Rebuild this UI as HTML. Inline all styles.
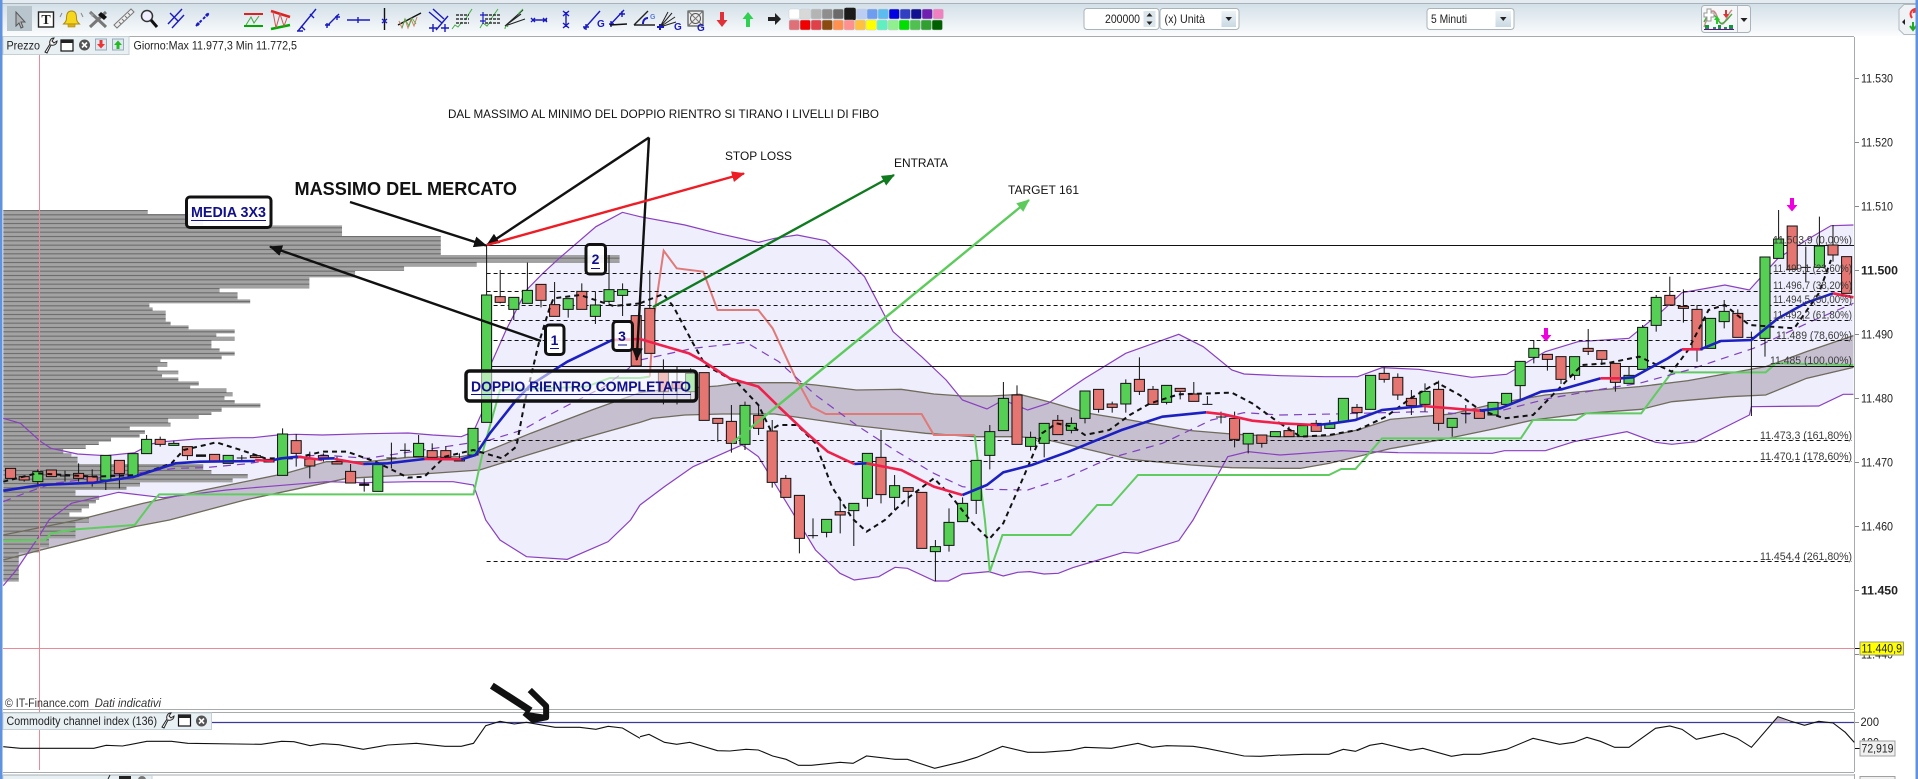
<!DOCTYPE html>
<html><head><meta charset="utf-8"><title>Grafico</title>
<style>
html,body{margin:0;padding:0;background:#fff;overflow:hidden;width:1918px;height:779px}
svg{display:block;font-family:"Liberation Sans",sans-serif}
.n *{vector-effect:non-scaling-stroke}
.ax{font-size:11.5px;fill:#222}
.fb{font-size:11px;fill:#3a3a3a}
.an{font-size:12px;fill:#111}
.tb{font-size:12px;fill:#222}
.g{fill:#55d055;stroke:#111;stroke-width:1}
.r{fill:#e57570;stroke:#111;stroke-width:1}
.w{fill:none;stroke:#111;stroke-width:1}
.bb{fill:none;stroke:#8a3fc0;stroke-width:1.2}
.bf{fill:#eeeefd;stroke:none}
.cl{fill:#c6bfd0;stroke:none}
.ce{fill:none;stroke:#6f6a5a;stroke-width:1.3}
.gl{fill:none;stroke:#60cc60;stroke-width:2}
.rl{fill:none;stroke:#e07a78;stroke-width:2}
.bl{fill:none;stroke:#1c20c0;stroke-width:2.6}
.rd{fill:none;stroke:#f0204a;stroke-width:2.6}
.kd{fill:none;stroke:#111;stroke-width:2;stroke-dasharray:5 4}
.pd{fill:none;stroke:#8040c0;stroke-width:1.2;stroke-dasharray:8 6}
.ck{fill:none;stroke:#111;stroke-width:1.1}
.bx{fill:none;stroke:#1a1ac0;stroke-width:1.4}
</style></head><body>
<svg width="1918" height="779" viewBox="0 0 1918 779" xmlns="http://www.w3.org/2000/svg">
<defs>
<linearGradient id="tbg" x1="0" y1="0" x2="0" y2="1"><stop offset="0" stop-color="#d3e0e8"/><stop offset="1" stop-color="#fbfcfd"/></linearGradient>
<linearGradient id="arb" x1="0" y1="0" x2="0" y2="1"><stop offset="0" stop-color="#eef3f6"/><stop offset="1" stop-color="#c9d9e3"/></linearGradient>
<pattern id="vp" patternUnits="userSpaceOnUse" width="100" height="13"><rect width="100" height="13" fill="#a3a3a3"/><rect y="6" width="100" height="3" fill="#666"/></pattern>
<marker id="mk" markerUnits="userSpaceOnUse" orient="auto" viewBox="0 0 13 11" refX="12" refY="5.5" markerWidth="13" markerHeight="11"><path d="M0 0L13 5.5L0 11Z" fill="#111"/></marker>
<marker id="mr" markerUnits="userSpaceOnUse" orient="auto" viewBox="0 0 13 11" refX="12" refY="5.5" markerWidth="13" markerHeight="11"><path d="M0 0L13 5.5L0 11Z" fill="#ee1c24"/></marker>
<marker id="mg" markerUnits="userSpaceOnUse" orient="auto" viewBox="0 0 13 11" refX="12" refY="5.5" markerWidth="13" markerHeight="11"><path d="M0 0L13 5.5L0 11Z" fill="#0f7a1e"/></marker>
<marker id="ml" markerUnits="userSpaceOnUse" orient="auto" viewBox="0 0 13 11" refX="12" refY="5.5" markerWidth="13" markerHeight="11"><path d="M0 0L13 5.5L0 11Z" fill="#5ccb5c"/></marker>
</defs>

<rect width="1918" height="779" fill="#fff"/>
<!-- top bar -->
<rect x="0" y="0" width="1918" height="3" fill="#e4ecf1"/>
<rect x="0" y="3" width="1918" height="1" fill="#a9b2b8"/>
<rect x="0" y="4" width="1918" height="32" fill="url(#tbg)"/>
<rect x="3" y="36" width="1851" height="1" fill="#a7abae"/>

<!-- chart content -->
<g class="n" transform="translate(0,260) scale(.40816,.33333)">
<!-- BB fill -->
<polygon class="bf" points="8,475 50,490 100,545 125,565 190,582 260,587 330,578 370,552 400,545 480,537 570,533 620,533 680,525 725,523 790,525 900,521 1000,519 1060,525 1130,530 1160,515 1180,460 1200,320 1240,210 1290,90 1330,40 1370,-5 1460,-100 1525,-143 1568,-130 1568,735 1545,780 1490,845 1390,898 1290,890 1225,840 1190,780 1160,675 1110,665 1010,665 890,668 800,665 650,680 555,690 400,713 290,697 175,730 120,780 95,830 40,930 8,977"/>
<g transform="translate(1568)"><polygon class="bf" points="0,-130 110,-105 190,-80 290,-53 330,-65 385,-75 455,-58 510,0 550,50 620,215 690,290 750,360 790,420 850,447 890,420 950,450 1000,430 1090,355 1190,280 1320,223 1380,260 1450,330 1480,342 1568,347 1568,585 1490,575 1440,590 1355,780 1320,842 1220,880 1185,877 1115,903 1060,923 1025,940 990,942 955,935 925,937 890,948 855,935 790,942 755,963 722,963 655,925 625,922 585,950 525,960 490,940 430,870 380,770 290,590 250,555 130,620 60,680 0,735"/></g>
<g transform="translate(3136)"><polygon class="bf" points="0,347 110,350 190,350 250,323 340,328 470,352 555,343 650,275 730,245 855,235 930,160 985,98 1090,75 1150,90 1220,-5 1290,-60 1350,-103 1405,-105 1405,403 1380,403 1320,438 1155,440 1150,465 1020,545 960,553 920,547 850,515 720,545 650,572 550,572 520,580 290,578 150,572 0,585"/></g>
<!-- cloud -->
<polygon class="cl" points="8,825 190,780 350,730 500,690 700,640 800,605 900,605 1000,592 1130,590 1190,575 1300,520 1450,450 1568,398 1568,487 1400,545 1280,590 1175,630 1000,645 850,655 600,720 415,780 330,800 100,870 8,900"/>
<!-- volume profile -->
<path fill="url(#vp)" d="M8,-150H362V-138H498V-104H838V-72H1080V-15H1518V8H1168V20H990V33H870V52H758V85H538V97H582V118H613V130H366V142H374V152H406V185H418V196H462V208H575V220H530V230H575V242H518V265H538V275H575V287H543V298H393V306H410V320H386V332H437V343H397V352H437V364H487V377H466V385H555V397H570V409H550V420H575V430H638V443H543V456H518V465H487V476H412V488H418V500H318V510H355V522H342V533H272V545H242V555H210V567H155V580H175V590H190V612H498V630H518V642H607V655H570V667H343V680H310V690H185V707H243V720H235V730H218V745H200V757H170V770H218V788H185V835H120V862H98V877H46V965H8Z"/>
<polyline class="ce" points="8,825 190,780 350,730 500,690 700,640 800,605 900,605 1000,592 1130,590 1190,575 1300,520 1450,450 1568,398"/>
<polyline class="ce" points="8,900 100,870 330,800 415,780 600,720 850,655 1000,645 1175,630 1280,590 1400,545 1568,487"/>
<g transform="translate(1568)">
<polygon class="cl" points="0,398 50,390 190,378 250,368 370,368 430,375 530,390 640,388 720,402 790,408 860,408 930,403 1000,425 1100,460 1200,480 1350,512 1450,522 1568,530 1568,625 1450,623 1350,615 1200,598 1110,572 1000,540 930,530 820,530 700,520 530,497 330,462 200,462 110,465 30,475 0,487"/>
<polyline class="ce" points="0,398 50,390 190,378 250,368 370,368 430,375 530,390 640,388 720,402 790,408 860,408 930,403 1000,425 1100,460 1200,480 1350,512 1450,522 1568,530"/>
<polyline class="ce" points="0,487 30,475 110,465 200,462 330,462 530,497 700,520 820,530 930,530 1000,540 1110,572 1200,598 1350,615 1450,623 1568,625"/>
</g>
<g transform="translate(3136)">
<polygon class="cl" points="0,530 120,528 190,510 270,478 420,462 530,430 650,405 780,390 880,380 1000,362 1190,320 1290,275 1405,227 1405,322 1290,355 1190,405 1100,410 960,425 885,448 750,460 620,480 530,505 400,538 270,566 190,590 120,610 50,625 0,625"/>
<polyline class="ce" points="0,530 120,528 190,510 270,478 420,462 530,430 650,405 780,390 880,380 1000,362 1190,320 1290,275 1405,227"/>
<polyline class="ce" points="0,625 50,625 120,610 190,590 270,566 400,538 530,505 620,480 750,460 885,448 960,425 1100,410 1190,405 1290,355 1405,322"/>
</g>
<!-- BB lines -->
<polyline class="bb" points="8,475 50,490 100,545 125,565 190,582 260,587 330,578 370,552 400,545 480,537 570,533 620,533 680,525 725,523 790,525 900,521 1000,519 1060,525 1130,530 1160,515 1180,460 1200,320 1240,210 1290,90 1330,40 1370,-5 1460,-100 1525,-143 1568,-130"/>
<polyline class="bb" points="8,977 40,930 95,830 120,780 175,730 290,697 400,713 555,690 650,680 800,665 890,668 1010,665 1110,665 1160,675 1190,780 1225,840 1290,890 1390,898 1490,845 1545,780 1568,735"/>
<g transform="translate(1568)">
<polyline class="bb" points="0,-130 110,-105 190,-80 290,-53 330,-65 385,-75 455,-58 510,0 550,50 620,215 690,290 750,360 790,420 850,447 890,420 950,450 1000,430 1090,355 1190,280 1320,223 1380,260 1450,330 1480,342 1568,347"/>
<polyline class="bb" points="0,735 60,680 130,620 250,555 290,590 380,770 430,870 490,940 525,960 585,950 625,922 655,925 722,963 755,963 790,942 855,935 890,948 925,937 955,935 990,942 1025,940 1060,923 1115,903 1185,877 1220,880 1320,842 1355,780 1440,590 1490,575 1568,585"/>
</g>
<g transform="translate(3136)">
<polyline class="bb" points="0,347 110,350 190,350 250,323 340,328 470,352 555,343 650,275 730,245 855,235 930,160 985,98 1090,75 1150,90 1220,-5 1290,-60 1350,-103 1405,-105"/>
<polyline class="bb" points="0,585 150,572 290,578 520,580 550,572 650,572 720,545 850,515 920,547 960,553 1020,545 1150,465 1155,440 1320,438 1380,403 1405,403"/>
</g>
<!-- stop line -->
<polyline class="gl" points="8,842 110,840 125,820 185,808 330,795 370,730 390,703 1160,703 1185,565 1225,390 1437,380 1494,354 1568,354"/>
<g transform="translate(1568)">
<polyline class="gl" points="0,354 24,350"/>
<polyline class="rl" points="24,350 33,180 58,-28 90,25 155,35 190,150 290,150 325,205 380,350 420,440 455,462 690,462 720,525 820,525"/>
<polyline class="gl" points="820,525 845,780 857,935 888,825 1055,825 1120,735 1155,735 1220,645 1568,645"/>
</g>
<g transform="translate(3136)"><polyline class="gl" points="0,645 120,645 150,627 185,627 250,535 590,535 620,480 725,480 750,460 885,460 960,337 1190,337 1215,310 1405,315"/></g>
<!-- purple dashed -->
<polyline class="pd" points="8,725 60,700 130,670 430,625 500,623 600,612 720,590 790,585 900,595 1200,540 1280,510 1330,475 1400,430 1480,380 1568,300"/>
<g transform="translate(1568)"><polyline class="pd" points="0,300 130,265 260,247 340,305 430,405 530,495 630,575 720,640 790,680 850,688 950,690 1050,650 1150,595 1280,550 1400,480 1480,458 1568,465"/></g>
<g transform="translate(3136)"><polyline class="pd" points="0,465 130,462 350,455 500,465 660,415 800,385 880,370 1000,330 1160,265 1300,185 1405,130"/></g>
</g>

<!-- red cursor lines -->
<path d="M39.5 54V770M3 648.5H1854" stroke="#e98a9a" stroke-width="1" fill="none"/>

<!-- fib lines -->
<path d="M486.6 245.5H1854M486.6 366.5H1854" stroke="#111" stroke-width="1" fill="none"/>
<path d="M486.6 273.5H1852M486.6 291.5H1852M486.6 305.5H1852M486.6 320.5H1852M486.6 340.5H1852M486.6 440.5H1852M486.6 461.5H1852M486.6 561.5H1852" stroke="#111" stroke-width="1" stroke-dasharray="4 3" fill="none"/>

<!-- candles: x=index, y=zoom units -->
<g class="n" transform="translate(486.6,260) scale(13.6,.33333)">
<path class="w" d="M-34 648V665M-33 628V680M-31 632V665M-30 610V665M-29 628V680M-28 586V690M-27 601V685M-26 581V655M-25 525V581M-24 530V560M-23 542V556M-22 560V600M-18 585V600M-15 505V646M-14 522V620M-13 575V655M-12 580V605M-11 590V612M-10 612V669M-9 655V695M-7 548V625M-6 550V592M-5 525V590M-4 550V592M-3 558V600M-2 580V603M0 -45V105M1 30V130M2 112V180M3 8V130M4 73V142M5 66V169M6 116V173M7 70V148M8 95V192M9 -15V130M10 70V168M12 32V280M13 298V433M14 320V433M15 325V418M17 490V545M18 435V578M19 425V570M20 435V525M21 480V683M22 645V712M23 835V880M24 775V835M25 778V832M26 712V820M27 730V858M28 580V740M29 510V730M30 645V750M31 683V740M33 840V964M34 745V875M35 712V785M36 601V762M37 495V628M38 366V512M39 376V553M40 515V572M41 490V592M42 465V524M43 472V520M44 393V490M45 388V458M46 425V458M47 358V458M48 292V405M49 378V433M50 376V433M51 385V418M52 366V424M53 408V433M54 455V490M55 455V562M56 520V580M57 525V563M59 500V530M61 480V514M62 480V505M64 432V478M66 322V368M67 340V420M68 390V465M69 370V455M70 362V512M71 475V530M72 435V490M76 304V420M77 240V310M78 283V332M79 290V372M80 290V360M81 207V285M82 272V315M83 310V395M84 320V370M85 195V328M86 105V215M87 50V135M88 88V188M89 135V305M91 120V205M92 148V232M93 215V468M94 235V290M95 -150V-5M97 -40V65M98 -130V22M99 -105V5"/>
<path class="w" d="M-31.37 648H-30.63M-18.37 594H-17.63M-7.37 594H-6.63M-6.37 571H-5.63M23.63 827H24.37M52.63 433H53.37M53.63 471H54.37M71.63 460H72.37M92.63 232H93.37M96.63 22H97.37"/>
<path d="M-21.37 587H-20.63M-9.37 674H-8.63" stroke="#111" stroke-width="2.5" fill="none"/>
<g class="r">
<rect x="-35.37" y="625" width=".74" height="30"/><rect x="-34.37" y="650" width=".74" height="10"/><rect x="-32.37" y="630" width=".74" height="20"/><rect x="-30.37" y="640" width=".74" height="15"/><rect x="-29.37" y="650" width=".74" height="17"/><rect x="-27.37" y="601" width=".74" height="40"/><rect x="-24.37" y="538" width=".74" height="15"/><rect x="-22.37" y="560" width=".74" height="27"/><rect x="-20.37" y="583" width=".74" height="22"/><rect x="-17.37" y="587" width=".74" height="6"/><rect x="-16.37" y="598" width=".74" height="8"/><rect x="-14.37" y="542" width=".74" height="38"/><rect x="-13.37" y="597" width=".74" height="21"/><rect x="-12.37" y="587" width=".74" height="10"/><rect x="-11.37" y="605" width=".74" height="7"/><rect x="-10.37" y="634" width=".74" height="35"/><rect x="-4.37" y="572" width=".74" height="20"/><rect x="-3.37" y="572" width=".74" height="20"/><rect x="-2.37" y="597" width=".74" height="6"/>
<rect x=".63" y="110" width=".74" height="17"/><rect x="3.63" y="73" width=".74" height="48"/><rect x="4.63" y="134" width=".74" height="35"/><rect x="6.63" y="94" width=".74" height="54"/><rect x="10.63" y="167" width=".74" height="151"/><rect x="11.63" y="145" width=".74" height="135"/><rect x="12.63" y="335" width=".74" height="60"/><rect x="13.63" y="365" width=".74" height="20"/><rect x="15.63" y="338" width=".74" height="143"/><rect x="16.63" y="475" width=".74" height="15"/><rect x="17.63" y="484" width=".74" height="66"/><rect x="19.63" y="466" width=".74" height="39"/><rect x="20.63" y="513" width=".74" height="154"/><rect x="21.63" y="655" width=".74" height="57"/><rect x="22.63" y="706" width=".74" height="129"/><rect x="25.63" y="755" width=".74" height="10"/><rect x="28.63" y="592" width=".74" height="112"/><rect x="30.63" y="683" width=".74" height="11"/><rect x="31.63" y="697" width=".74" height="168"/><rect x="38.63" y="405" width=".74" height="148"/><rect x="41.63" y="481" width=".74" height="43"/><rect x="44.63" y="388" width=".74" height="60"/><rect x="45.63" y="432" width=".74" height="10"/><rect x="47.63" y="358" width=".74" height="36"/><rect x="48.63" y="388" width=".74" height="45"/><rect x="50.63" y="385" width=".74" height="9"/><rect x="51.63" y="402" width=".74" height="22"/><rect x="54.63" y="475" width=".74" height="63"/><rect x="56.63" y="525" width=".74" height="25"/><rect x="58.63" y="512" width=".74" height="18"/><rect x="60.63" y="490" width=".74" height="24"/><rect x="63.63" y="442" width=".74" height="16"/><rect x="65.63" y="340" width=".74" height="18"/><rect x="66.63" y="352" width=".74" height="53"/><rect x="67.63" y="415" width=".74" height="22"/><rect x="69.63" y="388" width=".74" height="102"/><rect x="72.63" y="452" width=".74" height="23"/><rect x="77.63" y="283" width=".74" height="15"/><rect x="78.63" y="290" width=".74" height="68"/><rect x="80.63" y="265" width=".74" height="9"/><rect x="81.63" y="272" width=".74" height="26"/><rect x="82.63" y="310" width=".74" height="57"/><rect x="86.63" y="106" width=".74" height="29"/><rect x="87.63" y="139" width=".74" height="6"/><rect x="88.63" y="148" width=".74" height="122"/><rect x="91.63" y="160" width=".74" height="72"/><rect x="95.63" y="-102" width=".74" height="130"/><rect x="98.63" y="-45" width=".74" height="30"/><rect x="99.63" y="-10" width=".74" height="110"/>
</g>
<g class="g">
<rect x="-33.37" y="635" width=".74" height="30"/><rect x="-28.37" y="586" width=".74" height="74"/><rect x="-26.37" y="581" width=".74" height="69"/><rect x="-25.37" y="538" width=".74" height="43"/><rect x="-23.37" y="550" width=".74" height="6"/><rect x="-19.37" y="586" width=".74" height="24"/><rect x="-15.37" y="522" width=".74" height="124"/><rect x="-8.37" y="614" width=".74" height="80"/><rect x="-5.37" y="550" width=".74" height="40"/><rect x="-1.37" y="505" width=".74" height="80"/><rect x="-.37" y="105" width=".74" height="382"/>
<rect x="1.63" y="112" width=".74" height="36"/><rect x="2.63" y="91" width=".74" height="39"/><rect x="5.63" y="116" width=".74" height="32"/><rect x="7.63" y="135" width=".74" height="34"/><rect x="8.63" y="89" width=".74" height="35"/><rect x="9.63" y="89" width=".74" height="17"/><rect x="14.63" y="340" width=".74" height="55"/><rect x="18.63" y="436" width=".74" height="117"/><rect x="24.63" y="778" width=".74" height="39"/><rect x="26.63" y="730" width=".74" height="22"/><rect x="27.63" y="580" width=".74" height="135"/><rect x="29.63" y="677" width=".74" height="35"/><rect x="32.63" y="860" width=".74" height="15"/><rect x="33.63" y="787" width=".74" height="69"/><rect x="34.63" y="730" width=".74" height="55"/><rect x="35.63" y="601" width=".74" height="120"/><rect x="36.63" y="515" width=".74" height="71"/><rect x="37.63" y="415" width=".74" height="97"/><rect x="39.63" y="532" width=".74" height="27"/><rect x="40.63" y="490" width=".74" height="60"/><rect x="42.63" y="490" width=".74" height="21"/><rect x="43.63" y="393" width=".74" height="82"/><rect x="46.63" y="370" width=".74" height="62"/><rect x="49.63" y="376" width=".74" height="51"/><rect x="55.63" y="520" width=".74" height="32"/><rect x="57.63" y="515" width=".74" height="15"/><rect x="59.63" y="497" width=".74" height="33"/><rect x="61.63" y="492" width=".74" height="13"/><rect x="62.63" y="415" width=".74" height="70"/><rect x="64.63" y="346" width=".74" height="102"/><rect x="68.63" y="394" width=".74" height="39"/><rect x="70.63" y="475" width=".74" height="27"/><rect x="73.63" y="427" width=".74" height="38"/><rect x="74.63" y="400" width=".74" height="33"/><rect x="75.63" y="304" width=".74" height="73"/><rect x="76.63" y="265" width=".74" height="27"/><rect x="79.63" y="290" width=".74" height="56"/><rect x="83.63" y="346" width=".74" height="24"/><rect x="84.63" y="202" width=".74" height="126"/><rect x="85.63" y="112" width=".74" height="84"/><rect x="89.63" y="175" width=".74" height="90"/><rect x="90.63" y="154" width=".74" height="31"/><rect x="93.63" y="-9" width=".74" height="244"/><rect x="94.63" y="-63" width=".74" height="58"/><rect x="97.63" y="-42" width=".74" height="64"/>
</g>
</g>

<!-- MA lines over candles -->
<g class="n" transform="translate(0,260) scale(.40816,.33333)">
<polyline class="kd" points="8,665 90,640 230,650 340,645 420,610 450,570 530,547 590,570 650,595 720,595 790,575 850,575 920,605 1000,653 1040,650 1090,590 1160,570 1230,595 1265,560 1285,430 1320,250 1345,150 1356,115 1421,105 1503,138 1568,130"/>
<polyline class="bl" points="8,692 100,675 230,668 330,650 430,610 490,605 625,603"/>
<polyline class="rd" points="625,600 670,603"/>
<polyline class="bl" points="670,600 690,595 730,590"/>
<polyline class="rd" points="730,590 790,600"/>
<polyline class="bl" points="780,596 820,595"/>
<polyline class="rd" points="820,597 890,612"/>
<polyline class="bl" points="890,612 950,610 1040,597"/>
<polyline class="rd" points="1040,597 1130,598"/>
<polyline class="bl" points="1130,598 1165,585 1200,520 1265,420 1300,375 1390,305 1500,240"/>
<polyline class="rd" points="1500,240 1568,237"/>
<g transform="translate(1568)">
<polyline class="kd" points="0,130 57,102 82,140 130,250 160,315 240,370 290,435 320,510 340,495 385,495 430,550 470,680 520,775 555,815 600,780 650,720 720,655 760,705 815,790 855,838 890,790 940,650 985,520 1020,490 1060,500 1090,525 1150,510 1200,465 1250,430 1320,403 1450,398 1500,430 1568,490"/>
<polyline class="rd" points="0,237 50,255 120,280 150,300 220,355 290,380 340,440 400,510 460,575 525,612"/>
<polyline class="bl" points="525,612 555,610"/>
<polyline class="rd" points="555,610 640,630 720,680 790,705"/>
<polyline class="bl" points="790,705 850,675 890,637 960,615 1050,575 1130,535 1180,510 1280,470 1387,457"/>
<polyline class="rd" points="1387,457 1430,463 1500,482 1568,490"/>
</g>
<g transform="translate(3136)">
<polyline class="kd" points="0,490 50,530 120,525 190,510 260,470 320,415 385,368 440,405 490,450 550,475 620,465 680,390 740,315 800,310 880,290 960,335 1000,270 1050,150 1090,135 1150,195 1260,205 1320,100 1350,0"/>
<polyline class="rd" points="0,490 90,495"/>
<polyline class="bl" points="90,495 130,490 185,480 250,450 350,438"/>
<polyline class="rd" points="350,438 490,452"/>
<polyline class="bl" points="490,452 540,445 640,395 690,388 785,355"/>
<polyline class="rd" points="785,355 835,355"/>
<polyline class="bl" points="835,355 865,352 950,295 985,268"/>
<polyline class="rd" points="985,268 1030,268"/>
<polyline class="bl" points="1030,268 1080,243 1155,240 1220,175 1290,128 1355,100"/>
<polyline class="rd" points="1355,100 1405,112"/>
</g>
</g>

<!-- magenta arrows -->
<path d="M1544 328h4v7h3.500l-5.500 6.500l-5.500-6.500h3.500z" fill="#f000e0"/>
<path d="M1790 198h4v7h3.500l-5.500 6.500l-5.500-6.500h3.500z" fill="#f000e0"/>

<!-- annotation lines -->
<g fill="none" stroke-width="2.400">
<path d="M350 202L486 245.500" stroke="#111" marker-end="url(#mk)"/>
<path d="M649 137.500L487 245" stroke="#111" marker-end="url(#mk)"/>
<path d="M649 137.500L636.700 360" stroke="#111" marker-end="url(#mk)"/>
<path d="M541 341L270 246.700" stroke="#111" marker-end="url(#mk)"/>
<path d="M487 245L744 173.500" stroke="#ee1c24" marker-end="url(#mr)"/>
<path d="M653 307L894 175" stroke="#0f7a1e" marker-end="url(#mg)"/>
<path d="M732 443L1029 200" stroke="#5ccb5c" marker-end="url(#ml)"/>
</g>

<!-- annotation boxes -->
<rect x="186.500" y="197" width="84.500" height="30.500" rx="3.500" fill="#fff" fill-opacity=".93" stroke="#111" stroke-width="3"/>
<text x="191" y="217" font-size="14.500" font-weight="bold" fill="#10108c" textLength="75" lengthAdjust="spacingAndGlyphs">MEDIA 3X3</text>
<path d="M191 220.500H266" stroke="#10108c" stroke-width="1"/>
<rect x="586" y="244.500" width="19.500" height="29.500" rx="3.500" fill="#fff" fill-opacity=".9" stroke="#111" stroke-width="3"/>
<text x="595.500" y="264" font-size="14" font-weight="bold" fill="#10108c" text-anchor="middle">2</text><path d="M591 268.500H600" stroke="#10108c"/>
<rect x="545.500" y="325" width="18.500" height="29.500" rx="3.500" fill="#fff" fill-opacity=".9" stroke="#111" stroke-width="3"/>
<text x="554.500" y="345" font-size="14" font-weight="bold" fill="#10108c" text-anchor="middle">1</text><path d="M550 348.500H559" stroke="#10108c"/>
<rect x="613" y="321.500" width="19.500" height="29" rx="3.500" fill="#fff" fill-opacity=".7" stroke="#111" stroke-width="3"/>
<text x="622" y="341" font-size="14" font-weight="bold" fill="#10108c" text-anchor="middle">3</text><path d="M618 345H627" stroke="#10108c"/>
<rect x="466" y="371" width="230.500" height="30" rx="3.500" fill="#fff" fill-opacity=".55" stroke="#111" stroke-width="3.500"/>
<text x="471" y="391.500" font-size="15" font-weight="bold" fill="#10108c" textLength="220" lengthAdjust="spacingAndGlyphs">DOPPIO RIENTRO COMPLETATO</text>
<path d="M471 394.500H691" stroke="#10108c" stroke-width="1"/>

<!-- annotation texts -->
<text class="an" x="448" y="118" textLength="431" lengthAdjust="spacingAndGlyphs">DAL MASSIMO AL MINIMO DEL DOPPIO RIENTRO SI TIRANO I LIVELLI DI FIBO</text>
<text x="294.500" y="195" font-size="18.500" font-weight="bold" fill="#111" textLength="222.500" lengthAdjust="spacingAndGlyphs">MASSIMO DEL MERCATO</text>
<text class="an" x="725" y="160" textLength="67" lengthAdjust="spacingAndGlyphs">STOP LOSS</text>
<text class="an" x="894" y="167" textLength="54" lengthAdjust="spacingAndGlyphs">ENTRATA</text>
<text class="an" x="1008" y="194" textLength="71" lengthAdjust="spacingAndGlyphs">TARGET 161</text>

<!-- fib labels -->
<g>
<text class="fb" x="1773" y="243.500" textLength="79" lengthAdjust="spacingAndGlyphs">11.503,9 (0,00%)</text>
<text class="fb" x="1773" y="272" textLength="79" lengthAdjust="spacingAndGlyphs">11.499,1 (23,60%)</text>
<text class="fb" x="1773" y="289" textLength="79" lengthAdjust="spacingAndGlyphs">11.496,7 (38,20%)</text>
<text class="fb" x="1773" y="303" textLength="79" lengthAdjust="spacingAndGlyphs">11.494,5 (50,00%)</text>
<text class="fb" x="1773" y="318.500" textLength="79" lengthAdjust="spacingAndGlyphs">11.492,2 (61,80%)</text>
<text class="fb" x="1776" y="339" textLength="76" lengthAdjust="spacingAndGlyphs">11.489 (78,60%)</text>
<text class="fb" x="1770" y="364" textLength="82" lengthAdjust="spacingAndGlyphs">11.485 (100,00%)</text>
<text class="fb" x="1760" y="439" textLength="92" lengthAdjust="spacingAndGlyphs">11.473,3 (161,80%)</text>
<text class="fb" x="1760" y="460" textLength="92" lengthAdjust="spacingAndGlyphs">11.470,1 (178,60%)</text>
<text class="fb" x="1760" y="560" textLength="92" lengthAdjust="spacingAndGlyphs">11.454,4 (261,80%)</text>
</g>

<!-- axis -->
<path d="M1854.500 37V709M1854.500 712V772M1854.500 774V779" stroke="#a7abae" fill="none"/>
<path d="M3 709.500H1854M3 712.500H1854M3 772.500H1854M3 775H1854" stroke="#a7abae" fill="none"/>
<path d="M1855 78.500h4M1855 142.500h4M1855 206.500h4M1855 270.500h4M1855 334.500h4M1855 398.500h4M1855 462.500h4M1855 526.500h4M1855 590.500h4M1855 654.500h4M1855 722.500h4" stroke="#888"/>
<path d="M1855 648.500h5M1855 748.500h5" stroke="#111"/>
<g>
<text class="ax" x="1861" y="82.500" textLength="32" lengthAdjust="spacingAndGlyphs">11.530</text>
<text class="ax" x="1861" y="146.500" textLength="32" lengthAdjust="spacingAndGlyphs">11.520</text>
<text class="ax" x="1861" y="210.500" textLength="32" lengthAdjust="spacingAndGlyphs">11.510</text>
<text class="ax" x="1861" y="274.500" textLength="37" lengthAdjust="spacingAndGlyphs" font-weight="bold">11.500</text>
<text class="ax" x="1861" y="338.500" textLength="32" lengthAdjust="spacingAndGlyphs">11.490</text>
<text class="ax" x="1861" y="402.500" textLength="32" lengthAdjust="spacingAndGlyphs">11.480</text>
<text class="ax" x="1861" y="466.500" textLength="32" lengthAdjust="spacingAndGlyphs">11.470</text>
<text class="ax" x="1861" y="530.500" textLength="32" lengthAdjust="spacingAndGlyphs">11.460</text>
<text class="ax" x="1861" y="594.500" textLength="37" lengthAdjust="spacingAndGlyphs" font-weight="bold">11.450</text>
<text class="ax" x="1861" y="658.500" textLength="32" lengthAdjust="spacingAndGlyphs">11.440</text>
</g>
<rect x="1860" y="642" width="43.500" height="13" fill="#ffff00" stroke="#999"/>
<text class="ax" x="1861.500" y="652.500" textLength="40.500" lengthAdjust="spacingAndGlyphs">11.440,9</text>
<text class="ax" x="1860.500" y="726" textLength="18.500" lengthAdjust="spacingAndGlyphs">200</text>
<text class="ax" x="1861" y="746.500" textLength="18" lengthAdjust="spacingAndGlyphs">100</text>
<rect x="1860" y="741" width="35" height="15" fill="#f0f0f0" stroke="#a0a0a0"/>
<text class="ax" x="1861.500" y="752.500" textLength="32" lengthAdjust="spacingAndGlyphs">72,919</text>
<rect x="1860" y="776.500" width="35" height="5" fill="#f0f0f0" stroke="#a0a0a0"/>

<!-- copyright -->
<text x="5" y="707" font-size="11.500" fill="#333" textLength="84" lengthAdjust="spacingAndGlyphs">© IT-Finance.com</text>
<text x="94.700" y="707" font-size="11.500" font-style="italic" fill="#333" textLength="66.300" lengthAdjust="spacingAndGlyphs">Dati indicativi</text>

<!-- CCI panel -->
<path d="M212 722.500H1854" stroke="#3a3a9c" stroke-width="1.200"/>
<g class="n" transform="translate(0,520) scale(.40816,.33333)">
<polyline class="ck" points="8,680 50,685 150,685 230,685 260,676 300,678 360,664 420,664 460,670 640,673 690,664 720,665 760,677 790,671 830,674 890,688 950,675 1020,670 1090,679 1130,679 1160,670 1190,617 1225,604 1260,612 1290,607 1360,622 1420,622 1460,628 1490,619 1525,624 1568,655"/>
<g transform="translate(1568)"><polyline class="ck" points="0,650 22,643 60,667 90,673 122,667 190,692 220,693 260,688 290,690 325,708 358,718 388,736 420,736 490,727 522,730 555,708 625,718 655,718 722,745 790,725 825,712 888,679 950,697 990,697 1055,691 1090,682 1155,685 1220,670 1255,682 1290,677 1355,679 1387,685 1480,708 1520,709 1568,705"/></g>
<g transform="translate(3136)">
<polygon points="1205,607 1220,590 1250,607" fill="#c4b5cd"/>
<polyline class="ck" points="0,706 60,703 120,703 155,688 185,694 220,676 250,670 320,691 350,685 420,709 450,703 490,703 555,688 620,655 685,673 720,667 752,652 785,664 820,682 855,682 920,625 955,618 985,628 1020,658 1087,640 1120,655 1155,682 1220,590 1250,603 1285,616 1320,604 1355,609 1385,637 1407,667"/>
</g>
<path d="M1205 497L1300 572" fill="none" stroke="#111" stroke-width="7"/>
<path d="M1298 510L1338 558L1338 592L1306 600L1285 578" fill="none" stroke="#111" stroke-width="6" stroke-linejoin="round"/>
<path d="M1285 575L1340 585L1335 600L1305 606Z" fill="#111"/>
</g>

<!-- Prezzo legend -->
<rect x="3" y="36.500" width="126" height="18" fill="#e8f0f4" stroke="#c5d0d6"/>
<text class="tb" x="6.500" y="49.500" textLength="33.500" lengthAdjust="spacingAndGlyphs">Prezzo</text>
<path d="M45 52l5-8c-1-3 1-6 4-6l-2 3 2 2 3-2c0 3-3 5-6 4l-4 8z" fill="#fff" stroke="#222"/>
<rect x="61" y="40" width="12" height="11" fill="#fff" stroke="#111" stroke-width="1.200"/><rect x="61" y="40" width="12" height="3" fill="#222"/>
<circle cx="84.500" cy="45" r="5.500" fill="#555"/><path d="M82 42.500l5 5M87 42.500l-5 5" stroke="#fff" stroke-width="1.600"/>
<rect x="95.500" y="39" width="11" height="11" fill="#dfe8ef" stroke="#9ab"/><path d="M99.500 40h3v4h2.500l-4 4.500l-4-4.500h2.500z" fill="#e33"/>
<rect x="112.500" y="39" width="11" height="11" fill="#dfe8ef" stroke="#9ab"/><path d="M116.500 49h3v-4h2.500l-4-4.500l-4 4.500h2.500z" fill="#2b2"/>
<text class="tb" x="133.500" y="49.500" textLength="163.500" lengthAdjust="spacingAndGlyphs">Giorno:Max 11.977,3 Min 11.772,5</text>

<!-- CCI legend -->
<rect x="3" y="713" width="208.500" height="16.500" fill="#e8f0f4" stroke="#c5d0d6"/>
<text class="tb" x="6.500" y="725" textLength="150.500" lengthAdjust="spacingAndGlyphs">Commodity channel index (136)</text>
<path d="M162 727l5-8c-1-3 1-6 4-6l-2 3 2 2 3-2c0 3-3 5-6 4l-4 8z" fill="#fff" stroke="#222"/>
<rect x="178.500" y="715" width="12" height="11" fill="#fff" stroke="#111" stroke-width="1.200"/><rect x="178.500" y="715" width="12" height="3" fill="#222"/>
<circle cx="201.500" cy="721" r="5.500" fill="#555"/><path d="M199 718.500l5 5M204 718.500l-5 5" stroke="#fff" stroke-width="1.600"/>
<!-- third panel legend -->
<rect x="3" y="775.500" width="149" height="5" fill="#e8f0f4" stroke="#c5d0d6"/>
<path d="M108 779l2-4" stroke="#222"/><rect x="119" y="776" width="12" height="5" fill="#222"/><circle cx="142" cy="780" r="4" fill="#777"/>

<!-- toolbar icons -->
<rect x="7" y="6" width="25" height="25" fill="#b8c5cd"/>
<path d="M16 12V26L19 23L21 28L23 27L21 22L25 22Z" fill="#b0b4b8" stroke="#555"/>
<rect x="38.500" y="12" width="15" height="15" fill="#fff" stroke="#222" stroke-width="1.400"/>
<text x="46" y="24" font-family="Liberation Serif,serif" font-size="14" font-weight="bold" fill="#222" text-anchor="middle">T</text>
<path d="M71.500 11c-4 0-5 3-5 7c0 3-1 4-3 6h16c-2-2-3-3-3-6c0-4-1-7-5-7z" fill="#f6d71e" stroke="#a88a10"/><rect x="68" y="24" width="7" height="3" fill="#e0b010" stroke="#a88a10" stroke-width=".6"/>
<path d="M62 13l-2 4M81 13l2 4" stroke="#888"/>
<path d="M90 12l16 15M106 12l-16 15" stroke="#777" stroke-width="3"/><path d="M101 12l6 5-3 3-6-5z" fill="#111"/><path d="M90 12l2 5 2-2z" fill="#999"/>
<path d="M114 25l17-16 3 3-17 16z" fill="#eee" stroke="#777"/><path d="M119 22l2 2M122 19l2 2M125 16l2 2M128 13l2 2" stroke="#777"/>
<circle cx="147" cy="16" r="5.500" fill="#eef" stroke="#333" stroke-width="1.500"/><path d="M151 20l6 7" stroke="#111" stroke-width="3"/>
<g class="bx">
<path d="M168 24L182 9M172 28L184 15M170 13l8 8"/>
<path d="M196 26l14-14" stroke-dasharray="3 2" stroke-width="2"/><path d="M199 23l-2 2M208 14l-2 2" stroke-width="3"/>
<path d="M298 31L316 9M301 26l4 4M310 14l4 4M297 31l6 0"/>
<path d="M327 26l12-12M327 23v5M325 25h5M335 17h5M337 15v5"/>
<path d="M347 20H370M358 17v6M355 20h6"/>
<path d="M384.500 8V30" stroke="#111"/><path d="M382 19l5 4M387 19l-5 4"/>
<path d="M429 12l13 11M433 9l11 10M436 30l12-14M429 28h8M433 24v8M441 28h8M445 24v8"/>
<path d="M532 20h15M531 18l4 4M535 18l-4 4M543 18l4 4M547 18l-4 4"/>
<path d="M566 12v15M563 11l6 5M569 11l-6 5M563 23l6 5M569 23l-6 5"/>
<path d="M584 29l16-18M583 27h6M586 24v6"/>
<path d="M610 25L624 10M609 24h5M611 21v6M619 14h6M622 11v6"/>
<path d="M610 25L627 24"  stroke="#111"/>
<path d="M643 24c0-4 2-6 5-6" stroke-width="2"/>
<path d="M660 27l8-15M660 27l12-14M660 27l15-10M660 27l16-5" stroke="#222" stroke-width="1"/>
<path d="M657 27h7M660 24v6" stroke-width="2"/>
</g>
<g fill="none">
<path d="M398 25L421 13" stroke="#111" stroke-width="1.400"/>
<path d="M399 21l3 7 3-9 3 9 3-9 3 7 3-9" stroke="#d08060" stroke-width="1"/>
<path d="M402 28l3-9 4 7 3-8 4 6" stroke="#4a4" stroke-width=".8"/>
<path d="M244 14h19" stroke="#d22" stroke-width="2"/><path d="M244 26h19" stroke="#0a0" stroke-width="2"/><path d="M246 25l5-8 3 6 5-7" stroke="#4a4" stroke-width="1"/>
<path d="M271 11L290 17" stroke="#d22" stroke-width="2.500"/><path d="M271 29L290 25" stroke="#0a0" stroke-width="2.500"/><path d="M273 12l3 16 4-14 4 12 3-8" stroke="#c55" stroke-width="1"/>
<path d="M452 29l3-4 3 2 4-5M472 9l-7 11" stroke="#4a4" stroke-width="1"/><path d="M456 15h13M456 19h13M456 23h13" stroke="#111" stroke-width="1.200" stroke-dasharray="3 1"/>
<path d="M480 28l3-5 4 3 4-5M498 9l-7 10" stroke="#4a4" stroke-width="1"/><path d="M485 15h15M485 19h15M485 23h15" stroke="#111" stroke-width="1.200" stroke-dasharray="3 1"/><path d="M483 12v12M480 15h6M480 21h6" stroke="#1a1ac0" stroke-width="1.200"/>
<path d="M505 26l18-16M505 26l20-7M505 26l16-12" stroke="#222" stroke-width="1.100"/><path d="M505 29c0-3 2-4 3-2M518 14l5-5" stroke="#4a4" stroke-width="1"/>
<path d="M634 25L648 11M634 25H655" stroke="#222" stroke-width="1.400"/>
</g>
<text x="597" y="27" font-size="10" font-weight="bold" fill="#1a1ac0">G</text>
<text x="650" y="19" font-size="7" font-weight="bold" fill="#5a7ae0">G</text>
<text x="674" y="30" font-size="10" font-weight="bold" fill="#1a1ac0">G</text>
<rect x="688" y="11" width="15" height="15" fill="#eee" stroke="#333"/><circle cx="695.500" cy="18.500" r="5" fill="none" stroke="#555"/><path d="M688 11l15 15M703 11l-15 15" stroke="#777"/>
<text x="697" y="31" font-size="10" font-weight="bold" fill="#1a1ac0">G</text>
<path d="M720 12h4v8h3.500l-5.500 7l-5.500-7h3.500z" fill="#e03038"/>
<path d="M746 27h4v-8h3.500l-5.500-7l-5.500 7h3.500z" fill="#30d050"/>
<path d="M768 17h7v-4l6 6l-6 6v-4h-7z" fill="#222"/>

<!-- palette -->
<g stroke="#c8d0d4" stroke-width=".5">
<rect x="789" y="9" width="10.500" height="10" rx="1.500" fill="#fff"/><rect x="800" y="9" width="10.500" height="10" rx="1.500" fill="#d8d8d8"/><rect x="811" y="9" width="10.500" height="10" rx="1.500" fill="#b4b4b4"/><rect x="822" y="9" width="10.500" height="10" rx="1.500" fill="#8e8e8e"/><rect x="833" y="9" width="10.500" height="10" rx="1.500" fill="#6a6a6a"/><rect x="844" y="7.500" width="12" height="13" rx="2" fill="#1a1a1a"/><rect x="856.500" y="9" width="10.500" height="10" rx="1.500" fill="#bccdf4"/><rect x="867" y="9" width="10.500" height="10" rx="1.500" fill="#6e9df0"/><rect x="878" y="9" width="10.500" height="10" rx="1.500" fill="#5cbcf0"/><rect x="889" y="9" width="10.500" height="10" rx="1.500" fill="#0000e0"/><rect x="900" y="9" width="10.500" height="10" rx="1.500" fill="#3040c0"/><rect x="911" y="9" width="10.500" height="10" rx="1.500" fill="#101090"/><rect x="922" y="9" width="10.500" height="10" rx="1.500" fill="#7020b0"/><rect x="933" y="9" width="10.500" height="10" rx="1.500" fill="#f080c0"/>
<rect x="789" y="20" width="10.500" height="10" rx="1.500" fill="#e07078"/><rect x="800" y="20" width="10.500" height="10" rx="1.500" fill="#f00000"/><rect x="811" y="20" width="10.500" height="10" rx="1.500" fill="#e04048"/><rect x="822" y="20" width="10.500" height="10" rx="1.500" fill="#8a4a10"/><rect x="833" y="20" width="10.500" height="10" rx="1.500" fill="#ff9050"/><rect x="844" y="20" width="10.500" height="10" rx="1.500" fill="#ff9090"/><rect x="855" y="20" width="10.500" height="10" rx="1.500" fill="#ffc040"/><rect x="866" y="20" width="10.500" height="10" rx="1.500" fill="#ffff00"/><rect x="877" y="20" width="10.500" height="10" rx="1.500" fill="#60f0c0"/><rect x="888" y="20" width="10.500" height="10" rx="1.500" fill="#90f090"/><rect x="899" y="20" width="10.500" height="10" rx="1.500" fill="#00e000"/><rect x="910" y="20" width="10.500" height="10" rx="1.500" fill="#50c050"/><rect x="921" y="20" width="10.500" height="10" rx="1.500" fill="#30a030"/><rect x="932" y="20" width="10.500" height="10" rx="1.500" fill="#006000"/>
</g>

<!-- inputs -->
<rect x="1084" y="8.500" width="75" height="21" rx="3" fill="#fff" stroke="#a9b4ba"/>
<text class="tb" x="1105" y="23" textLength="35" lengthAdjust="spacingAndGlyphs">200000</text>
<rect x="1143.500" y="11" width="12" height="16" fill="#dbe6ec"/>
<path d="M1149.500 13l3 3.500h-6zM1149.500 25l3-3.500h-6z" fill="#222"/>
<rect x="1160" y="8.500" width="79" height="21" rx="3" fill="#fff" stroke="#a9b4ba"/>
<text class="tb" x="1164.500" y="23" textLength="40.500" lengthAdjust="spacingAndGlyphs">(x) Unità</text>
<rect x="1221.500" y="11" width="14.500" height="16" fill="url(#arb)"/>
<path d="M1225.500 17h6.500l-3.250 4z" fill="#222"/>
<rect x="1427" y="8.500" width="87" height="21" rx="3" fill="#fff" stroke="#a9b4ba"/>
<text class="tb" x="1431" y="23" textLength="36" lengthAdjust="spacingAndGlyphs">5 Minuti</text>
<rect x="1495.500" y="11" width="15.500" height="16" fill="url(#arb)"/>
<path d="M1500 17h6.500l-3.250 4z" fill="#222"/>

<!-- chart type button -->
<rect x="1701.500" y="5.500" width="49" height="27" rx="3" fill="#f4f6f7" stroke="#a9b4ba"/>
<path d="M1737.500 6V32" stroke="#b8c2c8"/>
<path d="M1740.500 18h7l-3.500 4z" fill="#222"/>
<path d="M1704 27c3-8 5-16 9-16s5 13 9 13s5-10 10-14" fill="none" stroke="#c88" stroke-width="1.400"/>
<path d="M1704 22c3-6 6-10 10-7s5 10 9 8s6-6 9-9" fill="none" stroke="#4a4" stroke-width="1.400"/>
<path d="M1704 13h3v-4h4v4h3v4h-3v4h-4v-4h-3z" fill="#fff" stroke="#999"/>
<path d="M1705 25h4v4h-4zM1713 27h3v2h-3zM1718 25h3v4h-3zM1724 27h3v2h-3zM1729 25h4v4h-4z" fill="#0a9a3a"/><path d="M1704 29.500h30" stroke="#70a" stroke-width="1"/>
<path d="M1716 24v-4h-2l3-4 3 4h-2v4z" fill="#2c2"/><path d="M1725 10h2v4h2l-3 4-3-4h2z" fill="#d33"/>

<!-- right tab -->
<path d="M1918 4.500h-14l-5 5v20l5 5h14z" fill="#f0f3f5" stroke="#b0bac0"/>
<path d="M1905 25l-3-3 3-3z" fill="#222"/>
<path d="M1912 18c-3-4-1-8 3-9l-1 3 4-1" fill="none" stroke="#e33" stroke-width="2"/>
<path d="M1913 22v8M1910 26l3 4 3-4" fill="none" stroke="#2a2" stroke-width="2"/>

<!-- window borders -->
<rect x="0" y="0" width="2.500" height="779" fill="#5f93e2"/>
<rect x="1915.500" y="0" width="2.500" height="779" fill="#5f93e2"/>
</svg>
</body></html>
